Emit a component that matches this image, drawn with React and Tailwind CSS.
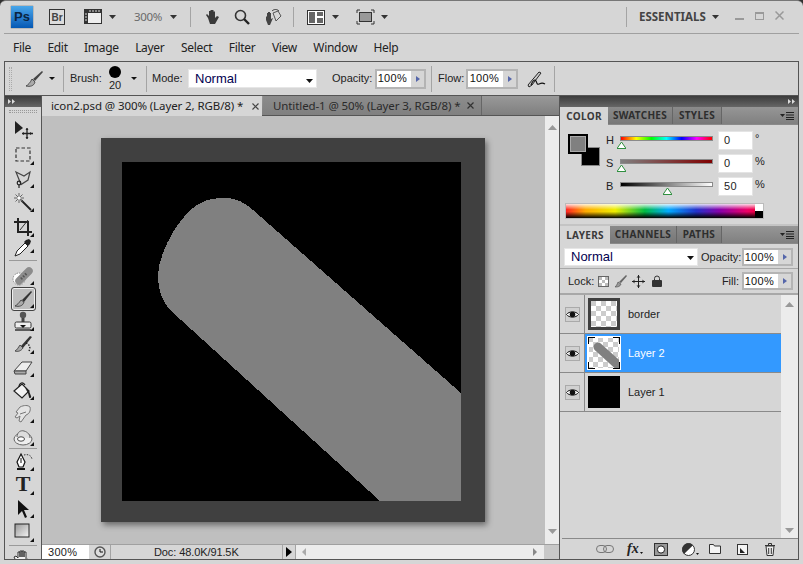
import React from "react";

const arial = "font-['Liberation_Sans',Arial,sans-serif]";
const ui = "font-['Noto_Sans','Open_Sans',sans-serif]";

const Tri = ({ w = 7, h = 4, className = "", fill = "#333" }) => (
  <svg width={w} height={h} viewBox={`0 0 ${w} ${h}`} className={`shrink-0 ${className}`}>
    <polygon points={`0,0 ${w},0 ${w / 2},${h}`} fill={fill} />
  </svg>
);

const Sep = ({ className = "" }) => <div className={`w-px bg-[#a4a4a4] shrink-0 ${className}`} />;

// tiny arrows pair on the dark panel headers
const Collapse = () => (
  <svg width="7" height="5" viewBox="0 0 7 5">
    <polygon points="0,0 3,2.5 0,5" fill="#ddd" />
    <polygon points="4,0 7,2.5 4,5" fill="#ddd" />
  </svg>
);

const Checker = ({ id, size = 32, cell = 5, children }) => (
  <svg width={size} height={size} viewBox={`0 0 ${size} ${size}`} className="block">
    <defs>
      <pattern id={id} width={cell * 2} height={cell * 2} patternUnits="userSpaceOnUse">
        <rect width={cell * 2} height={cell * 2} fill="#fff" />
        <rect width={cell} height={cell} fill="#ccc" />
        <rect x={cell} y={cell} width={cell} height={cell} fill="#ccc" />
      </pattern>
    </defs>
    <rect width={size} height={size} fill={`url(#${id})`} />
    {children}
  </svg>
);

/* ---------- tool icons, all on a 22x22 grid ---------- */
const I = ({ children }) => (
  <svg width="22" height="22" viewBox="0 0 22 22" className="block">
    {children}
  </svg>
);

const tools = {
  move: (
    <I>
      <polygon points="3,1 3,14 11,8" fill="#222" />
      <path d="M15 8v11M10 13.5h11" stroke="#222" strokeWidth="1.3" />
      <path d="M13.5 10l1.5-2 1.5 2zM13.5 17l1.5 2 1.5-2zM12 12l-2 1.5 2 1.5zM18 12l2 1.5-2 1.5z" fill="#222" />
    </I>
  ),
  marquee: (
    <I>
      <rect x="4" y="4" width="14" height="13" fill="none" stroke="#333" strokeWidth="1.2" strokeDasharray="3.5 2" />
    </I>
  ),
  lasso: (
    <I>
      <path d="M4 4l8 4 6-4-2 8-7 4.5z" fill="none" stroke="#444" strokeWidth="1.2" />
      <circle cx="7" cy="15" r="1.8" fill="none" stroke="#222" strokeWidth="1.2" />
      <path d="M7 17v3" stroke="#222" strokeWidth="1.2" />
    </I>
  ),
  wand: (
    <I>
      <path d="M9 9l10 10" stroke="#222" strokeWidth="1.8" />
      <path d="M7 2v10M2 7h10M3.5 3.5l7 7M10.5 3.5l-7 7" stroke="#666" strokeWidth="1" />
      <circle cx="7" cy="7" r="1.6" fill="#fff" />
    </I>
  ),
  crop: (
    <I>
      <path d="M6 2v14h14M2 6h14v14" fill="none" stroke="#222" strokeWidth="2" />
      <path d="M8 14l8-10" stroke="#333" strokeWidth="1" />
    </I>
  ),
  dropper: (
    <I>
      <path d="M3 20l2-5 8-8 3 3-8 8z" fill="#fff" stroke="#222" strokeWidth="1" />
      <path d="M12 6l4 4 2-2 1-3-2-2-3 1z" fill="#222" />
    </I>
  ),
  heal: (
    <I>
      <circle cx="7" cy="14" r="6" fill="#fff" stroke="#888" strokeWidth="1" strokeDasharray="1.5 1" />
      <path d="M7 16L17 6" stroke="#8c8c8c" strokeWidth="7.5" strokeLinecap="round" />
      <path d="M9 14l6-6" stroke="#555" strokeWidth="2.5" strokeDasharray="1.5 1.5" />
    </I>
  ),
  brush: (
    <I>
      <path d="M10 12L19 3l1 1-8 10z" fill="#333" />
      <path d="M9 12l3 2c-1 4-5 5-9 4 2-1 4-3 6-6z" fill="#aaa" stroke="#333" strokeWidth=".8" />
    </I>
  ),
  stamp: (
    <I>
      <circle cx="11" cy="4" r="3.2" fill="#555" />
      <path d="M9.5 7h3v4h-3z" fill="#444" />
      <rect x="3" y="11" width="16" height="6" rx="1.5" fill="#eee" stroke="#333" />
      <path d="M8 14h6l-3 3z" fill="#111" />
      <path d="M3 19h16" stroke="#333" strokeWidth="1.5" />
    </I>
  ),
  history: (
    <I>
      <path d="M9 12L18 2l2 1-9 11z" fill="#333" />
      <path d="M8 11l3 3c-2 3-5 4-8 3 2-1 3-3 5-6z" fill="#aaa" stroke="#333" strokeWidth=".8" />
      <path d="M14 9c3 1 5 4 3 8" fill="none" stroke="#222" strokeWidth="1.4" strokeDasharray="1.4 1.4" />
    </I>
  ),
  eraser: (
    <I>
      <path d="M2 14l8-9h10l-6 9z" fill="#eee" stroke="#444" />
      <path d="M2 14h12v3H3z" fill="#aaa" stroke="#444" />
    </I>
  ),
  bucket: (
    <I>
      <path d="M2 11l8-7 7 7-7 7z" fill="#f4f4f4" stroke="#222" strokeWidth="1.2" />
      <path d="M7 7c0-4 4-6 6-2" fill="none" stroke="#222" strokeWidth="1.2" />
      <path d="M13 8l4 3 2 5c1 2-2 3-2 1l-1-4z" fill="#222" />
    </I>
  ),
  smudge: (
    <I>
      <path d="M4 9l4-5c4-2 8-2 10 0 1 4-1 7-4 8l-5 7-2-1 1-5-3 2-2-1 3-4z" fill="#e4e4e4" stroke="#777" />
      <path d="M8 11l6-2" stroke="#777" />
    </I>
  ),
  dodge: (
    <I>
      <ellipse cx="11" cy="13" rx="9" ry="6" fill="#eee" stroke="#666" />
      <path d="M5 11c0-5 4-7 7-6 4 1 6 4 6 7" fill="#ddd" stroke="#666" />
      <ellipse cx="9" cy="13" rx="3.5" ry="2.2" fill="#fff" stroke="#444" />
    </I>
  ),
  pen: (
    <I>
      <path d="M9 3l4 8-2 5H7L5 11z" fill="#fff" stroke="#111" strokeWidth="1.2" />
      <path d="M9 7v5" stroke="#111" />
      <path d="M5 17h8v2H5z" fill="#111" />
      <path d="M12 4c4-1 7 0 8 4" fill="none" stroke="#333" strokeDasharray="1.4 1.4" />
    </I>
  ),
  select: (
    <I>
      <polygon points="6,2 6,17 10,13 13,20 15,19 12,12 17,12" fill="#111" />
    </I>
  ),
  rect: (
    <svg width="22" height="22" viewBox="0 0 22 22" className="block">
      <defs>
        <linearGradient id="rectFill" x1="0" y1="0" x2="1" y2="1">
          <stop offset="0" stopColor="#999" />
          <stop offset="1" stopColor="#f4f4f4" />
        </linearGradient>
      </defs>
      <rect x="3" y="3" width="14" height="13" fill="url(#rectFill)" stroke="#222" strokeWidth="1" />
    </svg>
  ),
  hand: (
    <I>
      <path d="M4 14l-2-4 2-1 2 2V5h2v5-6h2v6-6h2v6-5h2v8l2-1 1 1-3 6H7z" fill="#f2f2f2" stroke="#333" />
    </I>
  ),
};

const Tool = ({ name, h, corner = true, active = false, children }) => (
  <div className={`relative flex items-center justify-center shrink-0 ${h}`}>
    {active && (
      <div className="absolute left-[6px] right-[5px] top-0 bottom-[-1px] rounded-[3px] border border-[#444] bg-[#bdbdbd] shadow-[inset_0_0_0_1px_#eee]" />
    )}
    <div className="relative">{children || tools[name]}</div>
    {corner && (
      <svg width="4" height="4" viewBox="0 0 4 4" className="absolute right-[7px] bottom-[2px]">
        <polygon points="4,0 4,4 0,4" fill="#111" />
      </svg>
    )}
  </div>
);

const ToolRule = ({ className = "" }) => <div className={`h-px bg-[#9a9a9a] mx-[4px] shrink-0 ${className}`} />;

function Toolbar() {
  return (
    <div className="w-[37px] shrink-0 bg-[#d6d6d6] border-r border-[#555] flex flex-col overflow-hidden">
      <div className="h-[11px] shrink-0 bg-gradient-to-b from-[#3c3c3c] to-[#666] flex items-center pl-[3px]">
        <Collapse />
      </div>
      <div className="h-[12px] shrink-0 pt-[3px] px-[4px]">
        <div className="h-[3px] border-y border-dotted border-[#999]" />
      </div>
      <Tool name="move" h="h-[24px]" corner={false} />
      <Tool name="marquee" h="h-[24px]" />
      <Tool name="lasso" h="h-[23px]" />
      <Tool name="wand" h="h-[24px]" />
      <Tool name="crop" h="h-[25px]" />
      <Tool name="dropper" h="h-[16px]" />
      <ToolRule className="mt-[5px] mb-[3px]" />
      <Tool name="heal" h="h-[23px]" />
      <Tool name="brush" h="h-[23px]" active />
      <Tool name="stamp" h="h-[23px]" />
      <Tool name="history" h="h-[23px]" />
      <Tool name="eraser" h="h-[23px]" />
      <Tool name="bucket" h="h-[23px]" />
      <Tool name="smudge" h="h-[23px]" />
      <Tool name="dodge" h="h-[23px]" />
      <ToolRule className="mb-[1px]" />
      <Tool name="pen" h="h-[23px]" />
      <Tool h="h-[24px]">
        <span className="font-['Liberation_Serif',serif] font-bold text-[22px] leading-none text-[#222]">T</span>
      </Tool>
      <Tool name="select" h="h-[23px]" />
      <Tool name="rect" h="h-[24px]" />
      <ToolRule className="mt-[1px]" />
      <Tool name="hand" h="h-[24px]" corner={false} />
    </div>
  );
}

const Stepper = ({ value, boxW, h = "h-[19px]" }) => (
  <div className={`flex shrink-0 border-2 border-[#b4b4b4] bg-white ${h}`}>
    <div className={`${boxW} flex items-center justify-end pr-[3px] text-[11px] tracking-[0.3px] text-[#111] ${arial}`}>{value}</div>
    <div className="w-[14px] bg-[#d6d6d6] border-l border-white flex items-center justify-center">
      <svg width="4" height="6" viewBox="0 0 4 6">
        <polygon points="0,0 4,3 0,6" fill="#5566aa" />
      </svg>
    </div>
  </div>
);

function TitleBar() {
  return (
    <div className="h-[33px] shrink-0 mx-[4px] border-b border-[#a0a0a0] flex items-center relative">
      <div className={`ml-[7px] w-[22px] h-[22px] bg-gradient-to-b from-[#48a6ea] to-[#0458b4] shadow-[0_0_1px_#333] flex items-center justify-center text-[13px] font-bold text-[#0b2440] ${arial}`}>
        Ps
      </div>
      <div className={`ml-[16px] w-[16px] h-[16px] border border-[#333] bg-[#dcdcdc] flex items-center justify-center text-[10px] font-bold text-[#444] ${arial}`}>
        Br
      </div>
      <svg width="18" height="16" viewBox="0 0 18 16" className="ml-[19px]">
        <rect width="18" height="15" fill="#333" />
        <rect x="4" y="4" width="13" height="10" fill="#eee" />
        <path d="M1 5h2M1 8h2M1 11h2M6 1v2M9 1v2M12 1v2M15 1v2" stroke="#ddd" />
      </svg>
      <Tri className="ml-[7px]" />
      <span className={`ml-[18px] w-[26px] text-[11.5px] tracking-[-0.3px] whitespace-nowrap text-[#6a6a6a] ${ui}`}>300%</span>
      <Tri className="ml-[10px]" />
      <Sep className="h-[20px] ml-[13px]" />
      <svg width="16" height="16" viewBox="0 0 16 16" className="ml-[14px]">
        <path d="M3 9L1 6l1-1 2 2V2h1.5v5V1H7v6V1h1.5v6V2.5H10V9l2-2 2 1-4 7H5z" fill="#3a3a3a" />
      </svg>
      <svg width="16" height="16" viewBox="0 0 16 16" className="ml-[13px]">
        <circle cx="6.5" cy="6.5" r="5" fill="none" stroke="#333" strokeWidth="1.6" />
        <path d="M10 10l5 5" stroke="#222" strokeWidth="2.4" />
      </svg>
      <svg width="18" height="18" viewBox="0 0 18 18" className="ml-[14px]">
        <path d="M2 12V8l1 1V5h1v3-4h1v4-4h1v4-3h1v6l2-1-3 7H4z" fill="#444" />
        <path d="M9 5l5-2 3 5-5 5z" fill="none" stroke="#555" />
        <path d="M8 3c2-2 5-2 7 0" fill="none" stroke="#333" />
      </svg>
      <Sep className="h-[20px] ml-[11px]" />
      <svg width="18" height="15" viewBox="0 0 18 15" className="ml-[13px]">
        <rect x=".5" y=".5" width="17" height="14" fill="#fff" stroke="#333" />
        <path d="M2 2h6v11H2zM10 2h6v4h-6zM10 8h6v5h-6z" fill="#666" />
      </svg>
      <Tri className="ml-[7px]" />
      <svg width="19" height="16" viewBox="0 0 19 16" className="ml-[17px]">
        <path d="M1 4V1h3M15 1h3v3M18 12v3h-3M4 15H1v-3" fill="none" stroke="#333" />
        <rect x="3.5" y="3.5" width="12" height="9" fill="#999" stroke="#333" />
      </svg>
      <Tri className="ml-[6px]" />
      <Sep className="h-[20px] ml-[238px]" />
      <span className={`ml-[12px] w-[65px] whitespace-nowrap text-[11.5px] font-bold text-[#444] ${ui}`}>ESSENTIALS</span>
      <Tri className="ml-[8px]" />
      <div className="ml-[16px] w-[9px] h-[2px] bg-[#999] mt-[3px]" />
      <div className="ml-[11px] w-[9px] h-[8px] border border-[#999] border-t-2 mb-[3px]" />
      <svg width="9" height="9" viewBox="0 0 9 9" className="ml-[11px] mb-[3px]">
        <path d="M.5.5l8 8M8.5.5l-8 8" stroke="#999" strokeWidth="1.5" />
      </svg>
    </div>
  );
}

function MenuBar() {
  const items = ["File", "Edit", "Image", "Layer", "Select", "Filter", "View", "Window", "Help"];
  return (
    <div className={`h-[27px] shrink-0 flex items-center pl-[13px] gap-[16.4px] text-[12px] tracking-[-0.3px] text-[#222] ${ui}`}>
      {items.map((m) => (
        <span key={m}>{m}</span>
      ))}
    </div>
  );
}

function OptionsBar() {
  return (
    <div className={`h-[34px] shrink-0 border-b border-[#555] flex items-center text-[11px] text-[#222] ${arial}`}>
      <div className="ml-[4px] w-[3px] h-[24px] border-x border-dotted border-[#aaa]" />
      <svg width="20" height="20" viewBox="0 0 20 20" className="ml-[12px]">
        <path d="M9 10L18 2l1 1-8 9z" fill="#444" />
        <path d="M8 10l3 3c-1 4-5 5-9 4 2-1 4-3 6-7z" fill="#aaa" stroke="#333" strokeWidth=".8" />
      </svg>
      <Tri w={6} h={3} className="ml-[5px]" fill="#111" />
      <Sep className="h-[26px] ml-[8px]" />
      <span className="ml-[6px] w-[30px]">Brush:</span>
      <div className="ml-[8px] w-[14px] flex flex-col items-center">
        <div className="w-[12px] h-[12px] rounded-full bg-black" />
        <span className="leading-[12px] mt-[1px]">20</span>
      </div>
      <Tri w={6} h={3} className="ml-[9px]" fill="#111" />
      <Sep className="h-[26px] ml-[9px]" />
      <span className="ml-[5px] w-[31px]">Mode:</span>
      <div className="ml-[5px] w-[129px] h-[19px] bg-white border border-[#e6e6e6] flex items-center justify-between pl-[6px] pr-[3px] text-[13px] text-[#000050]">
        Normal
        <Tri className="mt-[5px]" fill="#111" />
      </div>
      <span className="ml-[15px] w-[40px] whitespace-nowrap">Opacity:</span>
      <div className="ml-[3px]">
        <Stepper value="100%" boxW="w-[33px]" h="h-[20px]" />
      </div>
      <Sep className="h-[26px] ml-[5px]" />
      <span className="ml-[6px] w-[25px]">Flow:</span>
      <div className="ml-[3px]">
        <Stepper value="100%" boxW="w-[34px]" h="h-[20px]" />
      </div>
      <svg width="22" height="20" viewBox="0 0 22 20" className="ml-[8px]">
        <path d="M2 16L13 3l2 1-9 12-3 2z" fill="#ccc" stroke="#222" />
        <path d="M5 16c2-5 4-6 5-4s1 4 3 3 3-2 6 0" fill="none" stroke="#111" strokeWidth="1.2" />
      </svg>
      <Sep className="h-[26px] ml-[6px]" />
    </div>
  );
}

function DocTabs() {
  return (
    <div className={`h-[20px] shrink-0 flex bg-gradient-to-b from-[#999] to-[#7f7f7f] border-b border-[#555] text-[11.5px] tracking-[-0.1px] text-[#222] ${ui}`}>
      <div className="w-[220px] bg-[#d6d6d6] flex items-center pl-[9px] h-[20px] whitespace-nowrap">
        <span className="w-[201px]">icon2.psd @ 300% (Layer 2, RGB/8) *</span>
        <svg width="7" height="7" viewBox="0 0 7 7">
          <path d="M.5.5l6 6M6.5.5l-6 6" stroke="#444" strokeWidth="1.2" />
        </svg>
      </div>
      <div className="w-[219px] ml-px bg-gradient-to-b from-[#8c8c8c] to-[#808080] border-r border-[#666] flex items-center pl-[10px] whitespace-nowrap">
        <span className="w-[194px] text-[#2a2a2a]">Untitled-1 @ 50% (Layer 3, RGB/8) *</span>
        <svg width="7" height="7" viewBox="0 0 7 7">
          <path d="M.5.5l6 6M6.5.5l-6 6" stroke="#333" strokeWidth="1.2" />
        </svg>
      </div>
    </div>
  );
}

function Artwork() {
  return (
    <svg width="384" height="384" viewBox="0 0 384 384" className="block shadow-[2px_3px_6px_rgba(0,0,0,0.45)]">
      <rect width="384" height="384" fill="#404040" />
      <rect x="21" y="24" width="339" height="339" fill="#000" />
      <path
        d="M152 72L360 255V363H279L69 172C60 162 57 150 57 137C58 122 64 108 72 94C77 86 83 78 89 72C94 68 100 64 106 62C113 60 120 60 126 60C134 60 143 64 152 72Z"
        fill="#808080"
        shapeRendering="crispEdges"
      />
    </svg>
  );
}

const ScrollArrow = ({ up }) => (
  <svg width="9" height="5" viewBox="0 0 9 5" className="shrink-0">
    <polygon points={up ? "0,5 9,5 4.5,0" : "0,0 9,0 4.5,5"} fill="#999" />
  </svg>
);

function StatusBar() {
  return (
    <div className={`h-[15px] shrink-0 flex border-t border-[#a0a0a0] text-[11px] text-[#222] ${arial}`}>
      <div className="w-[47px] bg-white flex items-center pl-[6px] tracking-[0.3px]">300%</div>
      <div className="w-[22px] border-r border-[#a4a4a4] flex items-center justify-center">
        <svg width="12" height="12" viewBox="0 0 12 12">
          <circle cx="6" cy="6" r="5" fill="#ddd" stroke="#555" strokeWidth="1.4" />
          <path d="M6 3v3h3" fill="none" stroke="#111" />
        </svg>
      </div>
      <div className="w-[171px] flex items-center tracking-[-0.1px] pl-[43px]">Doc: 48.0K/91.5K</div>
      <div className="w-[14px] border-x border-[#a4a4a4] flex items-center justify-center">
        <svg width="6" height="10" viewBox="0 0 6 10">
          <polygon points="0,0 6,5 0,10" fill="#000" />
        </svg>
      </div>
      <div className="w-[248px] bg-[#ececec] flex items-center justify-between px-[6px]">
        <svg width="4" height="8" viewBox="0 0 4 8">
          <polygon points="4,0 4,8 0,4" fill="#aaa" />
        </svg>
        <svg width="4" height="8" viewBox="0 0 4 8" className="mr-[1px]">
          <polygon points="0,0 0,8 4,4" fill="#888" />
        </svg>
      </div>
      <div className="flex-1 bg-[#c8c8c8]" />
    </div>
  );
}

function Document() {
  return (
    <div className="flex-1 min-w-0 flex flex-col border-r border-[#555]">
      <DocTabs />
      <div className="flex-1 min-h-0 flex">
        <div className="flex-1 bg-[#bfbfbf] pr-[1px] flex items-center justify-center">
          <Artwork />
        </div>
        <div className="w-[14px] bg-[#ececec] flex flex-col items-center justify-between pt-[9px] pb-[10px]">
          <ScrollArrow up />
          <ScrollArrow />
        </div>
      </div>
      <StatusBar />
    </div>
  );
}

const PanelTabs = ({ tabs }) => (
  <div className={`h-[18px] shrink-0 flex bg-gradient-to-b from-[#969696] to-[#808080] border-b border-[#8a8a8a] text-[10px] font-bold tracking-[0.3px] ${ui}`}>
    {tabs.map((t, i) => (
      <div
        key={t.label}
        className={`${t.w} flex items-center justify-center ${
          i === 0
            ? "bg-[#d6d6d6] text-[#3a3a3a] h-[18px]"
            : "text-[#2e2e2e] bg-gradient-to-b from-[#8a8a8a] to-[#777] border-r border-[#666]"
        }`}
      >
        {t.label}
      </div>
    ))}
    <div className="flex-1 flex items-center justify-end pr-[4px]">
      <svg width="14" height="8" viewBox="0 0 14 8">
        <polygon points="0,2 5,2 2.5,5" fill="#222" />
        <path d="M6 .5h8M6 3h8M6 5.5h8M6 7.5h8" stroke="#222" />
      </svg>
    </div>
  </div>
);

const Slider = ({ label, bar, knob, value, unit }) => (
  <div className="h-[23px] flex items-start">
    <span className="w-[14px] pt-[3px] text-[11px] leading-[12px]">{label}</span>
    <div className="relative w-[93px] h-[5px] mt-[5px] border border-[#8a8a8a]">
      <div className={`w-full h-full ${bar}`} />
      <svg width="9" height="7" viewBox="0 0 9 7" className={`absolute top-[5px] ${knob}`}>
        <polygon points="4.5,0 9,6.5 0,6.5" fill="#fff" stroke="#2f8f3f" />
      </svg>
    </div>
    <div className="ml-[5px] w-[35px] h-[19px] bg-white border border-[#e4e4e4] flex items-center pl-[5px] text-[11px] tracking-[0.3px]">
      {value}
    </div>
    <span className="ml-[2px] text-[11px] leading-[14px]">{unit}</span>
  </div>
);

function ColorPanel() {
  return (
    <div className={`h-[99px] shrink-0 text-[#222] ${arial}`}>
      <div className="flex pt-[6px] pl-[8px]">
        <div className="relative w-[32px] h-[32px] mt-[3px]">
          <div className="absolute left-[13px] top-[13px] w-[19px] h-[19px] bg-black border border-[#888]" />
          <div className="absolute left-0 top-0 w-[20px] h-[20px] bg-[#808080] border-2 border-black shadow-[inset_0_0_0_1px_#aaa]" />
        </div>
        <div className="ml-[6px]">
          <Slider
            label="H"
            value="0"
            unit="°"
            knob="left-[-4px]"
            bar="bg-[linear-gradient(to_right,#f00,#ff0,#0f0,#0ff,#00f,#f0f,#f00)]"
          />
          <Slider
            label="S"
            value="0"
            unit="%"
            knob="left-[-4px]"
            bar="bg-[linear-gradient(to_right,#808080,#800000)]"
          />
          <Slider
            label="B"
            value="50"
            unit="%"
            knob="left-[42px]"
            bar="bg-[linear-gradient(to_right,#000,#fff)]"
          />
        </div>
      </div>
      <div className="relative ml-[5px] mt-[3px] w-[199px] h-[16px] bg-[linear-gradient(to_right,#f22,#fa0_10%,#ee0_25%,#0b4_40%,#0af_52%,#23c_66%,#80a_78%,#e06_92%,#e02)] border border-[#bbb]">
        <div className="absolute inset-0 bg-[linear-gradient(to_bottom,rgba(255,255,255,0.85),rgba(255,255,255,0)_40%,rgba(0,0,0,0)_55%,#000)]" />
        <div className="absolute right-0 top-0 bottom-0 w-[8px] bg-[linear-gradient(to_bottom,#fff_50%,#000_50%)]" />
      </div>
    </div>
  );
}

const Eye = () => (
  <div className="w-[15px] h-[15px] border border-[#aaa] bg-[#d0d0d0] flex items-center justify-center">
    <svg width="13" height="9" viewBox="0 0 13 9">
      <path d="M.5 4.5C3 1 10 1 12.5 4.5 10 8 3 8 .5 4.5z" fill="#fff" stroke="#111" />
      <circle cx="6.5" cy="4.5" r="2.8" fill="#111" />
    </svg>
  </div>
);

const LayerRow = ({ name, selected, thumb, border = "border-[#8a8a8a]" }) => (
  <div className={`h-[39px] flex border-b ${border}`}>
    <div className="w-[25px] shrink-0 border-r border-[#8a8a8a] flex items-center justify-center">
      <Eye />
    </div>
    <div className={`flex-1 flex items-center text-[11px] ${selected ? "bg-[#3399ff] text-white" : "text-[#222]"}`}>
      <div className="ml-[3px] w-[32px] h-[32px]">{thumb}</div>
      <span className="ml-[8px]">{name}</span>
    </div>
  </div>
);

function LayersPanel() {
  const FootIcon = ({ children, ml }) => <div className={`${ml} flex items-center`}>{children}</div>;
  return (
    <div className={`flex-1 min-h-0 flex flex-col text-[#222] text-[11px] ${arial}`}>
      <div className="h-[24px] shrink-0 flex items-center pl-[4px] pt-[2px]">
        <div className="w-[134px] h-[18px] bg-white border border-[#e6e6e6] flex items-center justify-between pl-[6px] pr-[3px] text-[13px] text-[#000050]">
          Normal
          <Tri className="mt-[2px]" fill="#111" />
        </div>
        <span className="ml-[3px] w-[41px]">Opacity:</span>
        <Stepper value="100%" boxW="w-[33px]" h="h-[18px]" />
      </div>
      <div className="h-[27px] shrink-0 flex items-center pl-[8px] border-b-2 border-[#a8a8a8] border-t border-t-[#a8a8a8] ">
        <span>Lock:</span>
        <svg width="11" height="11" viewBox="0 0 11 11" className="ml-[4px]">
          <rect x=".5" y=".5" width="10" height="10" fill="#fff" stroke="#666" />
          <path d="M1 1h3v3H1zM7 1h3v3H7zM4 4h3v3H4zM1 7h3v3H1zM7 7h3v3H7z" fill="#bbb" />
        </svg>
        <svg width="13" height="14" viewBox="0 0 13 14" className="ml-[5px]">
          <path d="M5 8l7-7 1 1-6 7z" fill="#666" />
          <path d="M4 8l3 2c-1 3-4 3-6 3 1-1 2-2 3-5z" fill="#999" stroke="#444" strokeWidth=".6" />
        </svg>
        <svg width="13" height="13" viewBox="0 0 13 13" className="ml-[5px]">
          <path d="M6.5 0v13M0 6.5h13" stroke="#222" />
          <path d="M4.5 2.5l2-2 2 2zM4.5 10.5l2 2 2-2zM2.5 4.5l-2 2 2 2zM10.5 4.5l2 2-2 2z" fill="#222" />
        </svg>
        <svg width="10" height="12" viewBox="0 0 10 12" className="ml-[7px]">
          <path d="M2.5 5V3.5a2.5 2.5 0 015 0V5" fill="none" stroke="#333" />
          <rect y="5" width="10" height="7" rx="1" fill="#333" />
        </svg>
        <span className="ml-auto mr-[3px]">Fill:</span>
        <div className="mr-[5px]">
          <Stepper value="100%" boxW="w-[33px]" h="h-[18px]" />
        </div>
      </div>
      <div className="flex-1 min-h-0 flex">
        <div className="flex-1 min-w-0">
          <LayerRow
            name="border"
            thumb={
              <div className="border-[3px] border-[#404040] w-[32px] h-[32px]">
                <Checker id="chkA" size={26} cell={5} />
              </div>
            }
          />
          <LayerRow
            name="Layer 2"
            selected
            thumb={
              <div className="w-[32px] h-[32px] outline-1 outline-white">
                <Checker id="chkB" size={32} cell={5}>
                  <path d="M10 10L31 29" stroke="#808080" strokeWidth="9" strokeLinecap="round" />
                  <rect x=".5" y=".5" width="31" height="31" fill="none" stroke="#fff" />
                  <path d="M0 7V0h7M25 0h7v7M32 25v7h-7M7 32H0v-7" fill="none" stroke="#000" strokeWidth="2" />
                </Checker>
              </div>
            }
          />
          <LayerRow name="Layer 1" thumb={<div className="w-[32px] h-[32px] bg-black" />} />
        </div>
        <div className="w-[17px] shrink-0 bg-[#ececec] flex flex-col items-center justify-between pt-[7px] pb-[5px]">
          <ScrollArrow up />
          <ScrollArrow />
        </div>
      </div>
      <div className="h-[21px] shrink-0 border-t border-[#8a8a8a] flex items-center ml-[2px]">
        <FootIcon ml="ml-[34px]">
          <svg width="18" height="8" viewBox="0 0 18 8">
            <rect x=".5" y=".5" width="10" height="7" rx="3.5" fill="none" stroke="#777" />
            <rect x="7.5" y=".5" width="10" height="7" rx="3.5" fill="none" stroke="#777" />
          </svg>
        </FootIcon>
        <FootIcon ml="ml-[13px]">
          <span className="font-['Liberation_Serif',serif] italic font-bold text-[14px] leading-none text-[#222]">fx</span>
          <Tri w={3} h={2} className="mt-[8px] ml-[1px]" fill="#111" />
        </FootIcon>
        <FootIcon ml="ml-[11px]">
          <svg width="14" height="13" viewBox="0 0 14 13">
            <rect x=".5" y=".5" width="13" height="12" fill="#999" stroke="#333" />
            <circle cx="7" cy="6.5" r="3.6" fill="#fff" stroke="#222" />
          </svg>
        </FootIcon>
        <FootIcon ml="ml-[14px]">
          <svg width="13" height="13" viewBox="0 0 13 13">
            <circle cx="6.5" cy="6.5" r="6" fill="#fff" stroke="#333" />
            <path d="M11 2.2A6 6 0 002 11z" fill="#333" />
          </svg>
          <Tri w={3} h={2} className="mt-[10px] ml-[1px]" fill="#111" />
        </FootIcon>
        <FootIcon ml="ml-[10px]">
          <svg width="12" height="10" viewBox="0 0 12 10">
            <path d="M.5 9.5v-9h4l1 1.5h6v7.5z" fill="#f4f4f4" stroke="#333" />
          </svg>
        </FootIcon>
        <FootIcon ml="ml-[16px]">
          <svg width="11" height="11" viewBox="0 0 11 11">
            <rect x=".5" y=".5" width="10" height="10" fill="#f4f4f4" stroke="#333" />
            <path d="M3 4v5h5z" fill="#222" />
          </svg>
        </FootIcon>
        <FootIcon ml="ml-[17px]">
          <svg width="10" height="13" viewBox="0 0 10 13">
            <path d="M1 3h8l-1 9.5H2z" fill="#eee" stroke="#333" />
            <path d="M0 2.5h10M3.5 2.5V.5h3v2M3.7 5v6M6.3 5v6" stroke="#333" fill="none" />
          </svg>
        </FootIcon>
      </div>
    </div>
  );
}

function RightPanels() {
  return (
    <div className="w-[238px] shrink-0 bg-[#d6d6d6] flex flex-col">
      <div className="h-[11px] shrink-0 bg-gradient-to-b from-[#3c3c3c] to-[#666] flex items-center justify-end pr-[3px]">
        <Collapse />
      </div>
      <PanelTabs
        tabs={[
          { label: "COLOR", w: "w-[48px]" },
          { label: "SWATCHES", w: "w-[65px]" },
          { label: "STYLES", w: "w-[49px]" },
        ]}
      />
      <ColorPanel />
      <div className="h-[2px] shrink-0 bg-[#c4c4c4]" />
      <PanelTabs
        tabs={[
          { label: "LAYERS", w: "w-[50px]" },
          { label: "CHANNELS", w: "w-[67px]" },
          { label: "PATHS", w: "w-[45px]" },
        ]}
      />
      <LayersPanel />
    </div>
  );
}

export default function App() {
  return (
    <div className="w-[803px] h-[564px] overflow-hidden bg-[#303030]">
      <div className="w-full h-full bg-[#d6d6d6] rounded-t-[6px] border-t border-[#777] flex flex-col">
        <TitleBar />
        <MenuBar />
        <div className="mx-[4px] mb-[4px] flex-1 min-h-0 border border-[#555] flex flex-col">
          <OptionsBar />
          <div className="flex-1 min-h-0 flex">
            <Toolbar />
            <Document />
            <RightPanels />
          </div>
        </div>
      </div>
    </div>
  );
}
